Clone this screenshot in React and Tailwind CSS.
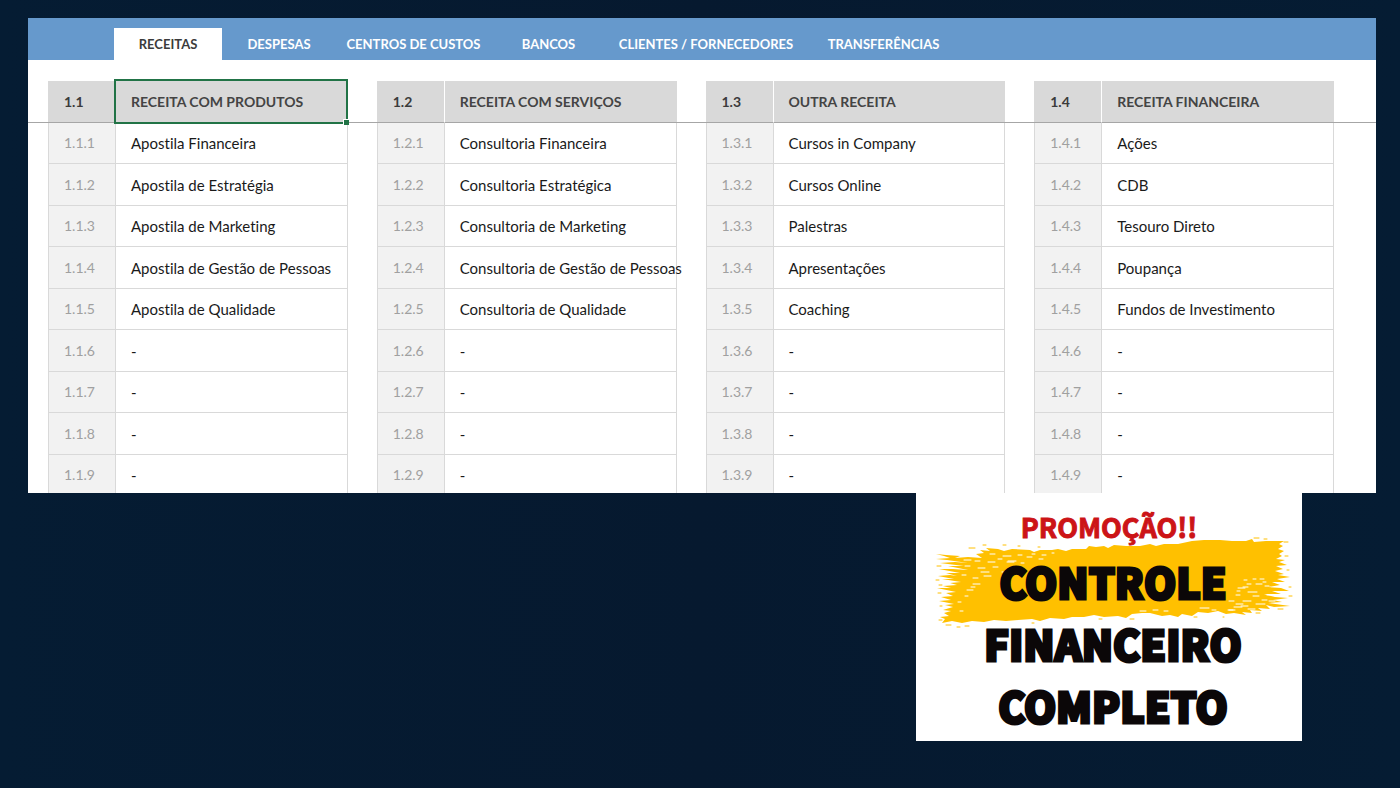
import React from 'react';

const tabs = [
  { label: 'RECEITAS', className: 'w-[108px] bg-white text-[#3b3b3b]' },
  { label: 'DESPESAS', className: 'w-[114px] text-white' },
  { label: 'CENTROS DE CUSTOS', className: 'w-[155px] text-white' },
  { label: 'BANCOS', className: 'w-[115px] text-white' },
  { label: 'CLIENTES / FORNECEDORES', className: 'w-[200px] text-white' },
  { label: 'TRANSFERÊNCIAS', className: 'w-[155px] text-white' }
];

const groups = [
  {
    code: '1.1',
    title: 'RECEITA COM PRODUTOS',
    items: [
      'Apostila Financeira',
      'Apostila de Estratégia',
      'Apostila de Marketing',
      'Apostila de Gestão de Pessoas',
      'Apostila de Qualidade'
    ]
  },
  {
    code: '1.2',
    title: 'RECEITA COM SERVIÇOS',
    items: [
      'Consultoria Financeira',
      'Consultoria Estratégica',
      'Consultoria de Marketing',
      'Consultoria de Gestão de Pessoas',
      'Consultoria de Qualidade'
    ]
  },
  {
    code: '1.3',
    title: 'OUTRA RECEITA',
    items: ['Cursos in Company', 'Cursos Online', 'Palestras', 'Apresentações', 'Coaching']
  },
  {
    code: '1.4',
    title: 'RECEITA FINANCEIRA',
    items: ['Ações', 'CDB', 'Tesouro Direto', 'Poupança', 'Fundos de Investimento']
  }
];

const rows = [1, 2, 3, 4, 5, 6, 7, 8, 9];

const TabBar = () => (
  <nav className="flex items-end bg-[#6699cc] pl-[86px] pt-[10px]">
    {tabs.map((tab) => (
      <button
        key={tab.label}
        type="button"
        className={`h-8 shrink-0 pt-0.5 text-center text-[13px] font-bold whitespace-nowrap ${tab.className}`}
      >
        {tab.label}
      </button>
    ))}
  </nav>
);

const AccountsTable = () => (
  <table className="w-full table-fixed border-separate border-spacing-0 text-left text-sm [font-variant-ligatures:none]">
    <colgroup>
      <col className="w-[20px]" />
      {groups.map((group, index) => (
        <React.Fragment key={group.code}>
          <col className="w-[67px]" />
          <col />
          <col className={index === groups.length - 1 ? 'w-[42px]' : 'w-[29px]'} />
        </React.Fragment>
      ))}
    </colgroup>
    <thead>
      <tr className="h-[42px]">
        <td className="border-b border-[#a6a6a6]" />
        {groups.map((group, index) => (
          <React.Fragment key={group.code}>
            <th scope="col" className="border-b border-[#a6a6a6] bg-[#d9d9d9] pl-4 font-bold text-[#3b3b3b]">
              {group.code}
            </th>
            <th
              scope="col"
              className="relative border-b border-l border-b-[#a6a6a6] border-l-white bg-[#d9d9d9] pl-[15px] font-bold whitespace-nowrap text-[#444444]"
            >
              {group.title}
              {/* Selected cell */}
              {index === 0 && (
                <span className="absolute -top-0.5 right-0 -bottom-0.5 -left-0.5 border-2 border-[#217346]">
                  <span className="absolute -right-[3px] -bottom-[3px] size-[6px] border-t border-l border-white bg-[#217346]" />
                </span>
              )}
            </th>
            <td className="border-b border-[#a6a6a6]" />
          </React.Fragment>
        ))}
      </tr>
    </thead>
    <tbody>
      {rows.map((row) => (
        <tr key={row} className="odd:h-[41px] even:h-[42px]">
          <td />
          {groups.map((group) => (
            <React.Fragment key={group.code}>
              <td className="border-b border-l border-[#d9d9d9] bg-[#f2f2f2] pl-[15px] text-[#a0a0a0]">
                {group.code}.{row}
              </td>
              <td className="border-x border-b border-[#d9d9d9] pl-[15px] text-[15px] leading-5 whitespace-nowrap text-[#1a1a1a]">
                {group.items[row - 1] || '-'}
              </td>
              <td />
            </React.Fragment>
          ))}
        </tr>
      ))}
    </tbody>
  </table>
);

const BrushStroke = () => (
  <svg
    className="absolute top-[43px] left-[18px] h-[92px] w-[360px]"
    viewBox="934 536 360 92"
    fill="none"
    aria-hidden="true"
  >
    <path
      fill="#ffc000"
      d="M936 554L946 555 960 556 955 558 968 557 982 558 976 554 984 553 980 550 990 551 986 548 998 549 1004 551 1012 549 1030 550 1034 552 1040 550 1052 550 1058 549 1066 551 1072 549 1086 549 1089 546 1096 547 1104 546 1108 548 1114 545 1126 546 1140 546 1150 544 1156 546 1164 544 1178 544 1192 541 1204 540 1220 540 1232 541 1246 541 1252 539 1254 542 1266 541 1276 541 1284 541 1279 544 1283 546 1278 549 1284 551 1279 554 1282 556 1276 559 1285 560 1279 562 1287 565 1276 566 1283 569 1275 571 1284 574 1278 575 1290 577 1277 579 1285 582 1272 582 1280 585 1268 587 1281 588 1289 591 1272 591 1281 594 1264 594 1275 597 1288 598 1273 600 1282 602 1268 603 1290 606 1274 607 1266 605 1270 609 1258 608 1262 611 1250 610 1252 613 1242 612 1246 615 1234 613 1226 614 1218 611 1208 613 1198 612 1192 616 1182 614 1178 617 1170 615 1162 616 1150 613 1142 613 1132 614 1126 618 1118 616 1104 617 1094 615 1084 617 1072 617 1064 619 1050 618 1040 621 1032 619 1018 620 1006 621 994 620 984 622 972 621 962 623 952 621 942 623 945 619 940 617 949 616 944 613 951 611 943 610 953 607 945 605 954 604 939 601 951 600 941 597 953 596 946 593 956 592 937 588 951 588 943 586 957 585 950 583 961 582 942 579 954 579 938 576 950 575 957 576 946 573 960 573 939 569 953 569 968 570 948 566 964 566 940 563 955 562 968 563 947 560 936 559 950 558 944 556Z"
    />
    {/* Dry bristle marks */}
    <g stroke="#fff" strokeLinecap="round">
      <path d="M964 560h7m4 1h5m8 1h7m3-3h4m5 3h7M965 566h5m8 2h7m-4 4h8m4-5h5m4 5h6M962 575h4m7 3h5m6-2h7m-18 8h7m-13 6h6M990 554h5m8 2h8m7-1h4m-14 6h8m5 2h3m3-6h5m7 2h4M1032 554h3m7 1h4m6-2h2" />
      <path d="M1238 588h7m3 4h9m-4 4h6m6-10h4m-2 9h8m-19 9h9m4-3h6m-41 6h8m6 2h7m-12-22h5m8-3h6m-2-5h4m-11 0h3M1236 595h4m3 6h8m-15 3h7m-14 6h6" />
      <path d="M1229 601h5m3-10h3m22 9h5m-20-16h4m12-2h3m-22-2h3M1200 608h9m3 2h4m12 0h5m8-4h7M1140 611h6m7-1h5m6 1h4M958 602h3m4-6h3m-8 15h3m8-24h4" />
    </g>
    <g stroke="#ffc000" strokeLinecap="round">
      <path d="M937 566h4m-5 14h3m0 5h3m-4 8h3m-1 13h2m-3 14h3m4 5h5m6 2h3m5-1h4m0-78h6m8-3h3M1254 538h5m5 1h3m17 3h4m-3 14h3m-1 14h2m0 17h2m-2 9h3M1278 609h5m-27 4h4m-37 4h1M1003 545h3m12 1h2M1032 623h2m65-4h3m-64-72h2m90 72h4m60-2h3" />
    </g>
  </svg>
);

const PromoCard = () => (
  <aside className="relative w-[386px] bg-white pt-[11px] pb-[5px] text-center font-['Noto_Sans_CJK_JP','Liberation_Sans',sans-serif]">
    <BrushStroke />
    <p className="relative text-[27px] leading-[46px] font-bold text-[#cc1417] [-webkit-text-stroke:1px_#cc1417]">
      PROMOÇÃO!!
    </p>
    <h2 className="relative pl-2 text-[41px] leading-[62px] font-black text-[#0b0708] [-webkit-text-stroke:3px_#0b0708]">
      CONTROLE
      <br />
      FINANCEIRO
      <br />
      COMPLETO
    </h2>
  </aside>
);

const App = () => {
  return (
    <div className="min-h-screen bg-gradient-to-r from-[#051c33] via-[#06192f] to-[#051c33] pt-[18px] pr-6 pb-[47px] pl-7 font-['Lato',sans-serif]">
      <main>
        <section className="h-[475px] overflow-hidden bg-white">
          <TabBar />
          <div className="pt-[21px]">
            <AccountsTable />
          </div>
        </section>
        <div className="flex justify-end pr-[74px]">
          <PromoCard />
        </div>
      </main>
    </div>
  );
};

export default App;
